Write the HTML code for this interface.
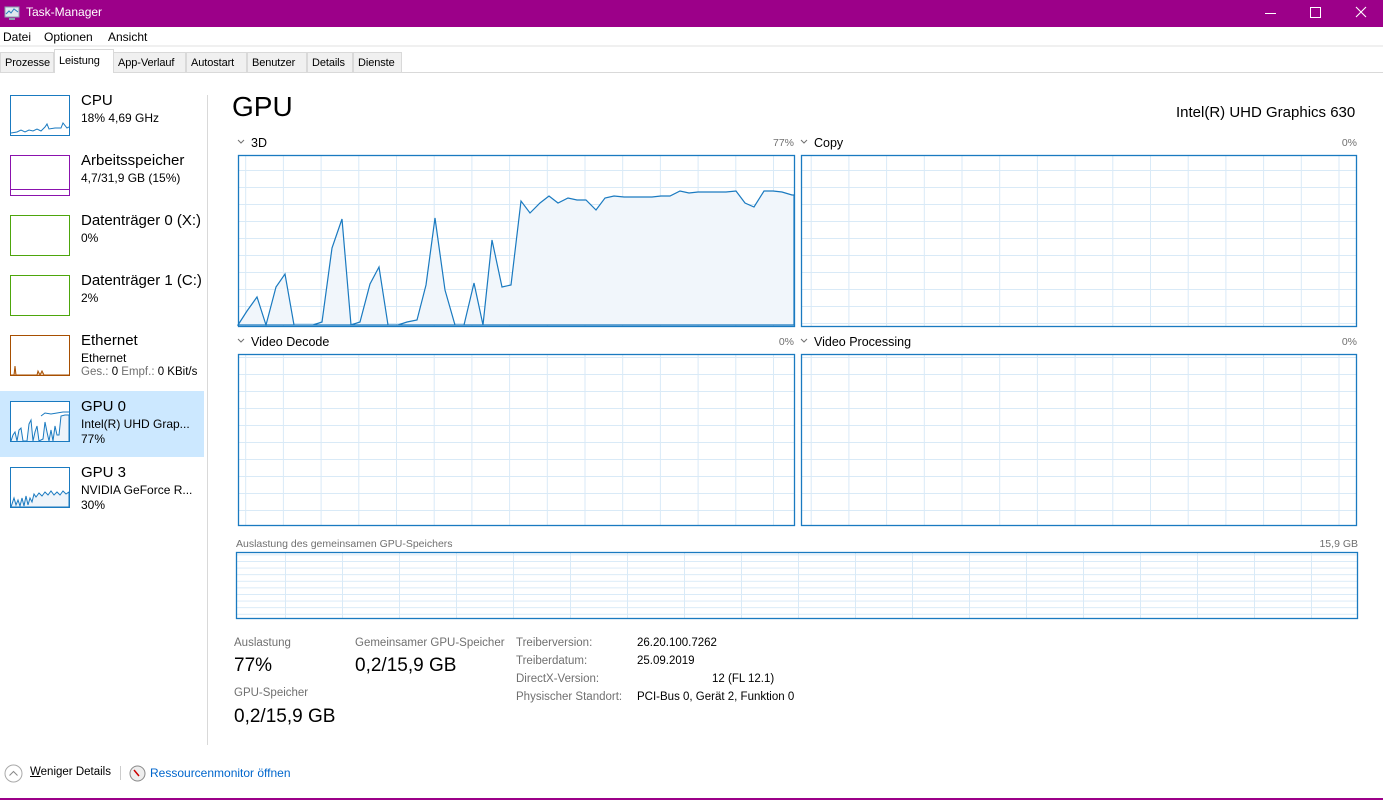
<!DOCTYPE html>
<html><head><meta charset="utf-8"><style>
*{margin:0;padding:0;box-sizing:border-box}
body{width:1383px;height:800px;overflow:hidden;background:#fff;font-family:"Segoe UI","Liberation Sans",sans-serif;color:#000;position:relative}
.a{position:absolute;white-space:nowrap}
.title{left:0;top:0;width:1383px;height:27px;background:#9c0089;color:#fff;font-size:12px}
.menu span{font-size:12px}
.tab{position:absolute;top:52px;height:21px;border:1px solid #d9d9d9;background:#f0f0f0;font-size:11px;padding:4px 0 0 4px;letter-spacing:-0.1px;overflow:hidden}
.thumb{position:absolute;left:10px;width:60px;height:41px;border:1px solid}
.it1{font-size:15px;left:81px}
.it2{font-size:12px;left:81px}
.g{font-size:11.5px;color:#707070}
.v{font-size:11.5px;color:#000}
</style></head><body>
<div class="a title">
 <svg class="a" style="left:4px;top:5px" width="16" height="16" viewBox="0 0 16 16"><rect x="1" y="2" width="14" height="10" fill="#dfe8ee" stroke="#8ba0b0"/><polyline points="2,9 5,6 7,8 10,4 14,7" fill="none" stroke="#2a7fbf"/><rect x="5" y="13" width="6" height="2" fill="#8ba0b0"/></svg>
 <span class="a" style="left:26px;top:5px">Task-Manager</span>
 <div class="a" style="left:1265px;top:13px;width:11px;height:1px;background:#fff"></div>
 <div class="a" style="left:1310px;top:7px;width:11px;height:11px;border:1px solid #fff"></div>
 <svg class="a" style="left:1355px;top:6px" width="12" height="12"><path d="M1 1L11 11M11 1L1 11" stroke="#fff" stroke-width="1.1"/></svg>
</div>
<div class="a menu" style="left:0;top:27px;width:1383px;height:20px;border-bottom:2px solid #f0f0f0">
 <span class="a" style="left:3px;top:3px">Datei</span><span class="a" style="left:44px;top:3px">Optionen</span><span class="a" style="left:108px;top:3px">Ansicht</span>
</div>
<div class="a" style="left:0;top:72px;width:1383px;height:1px;background:#d9d9d9"></div>
<div class="tab" style="left:0;width:54px">Prozesse</div>
<div class="tab" style="left:54px;top:49px;height:24px;width:60px;background:#fff;border-bottom:none;padding-top:5px">Leistung</div>
<div class="tab" style="left:113px;width:73px">App-Verlauf</div>
<div class="tab" style="left:186px;width:61px">Autostart</div>
<div class="tab" style="left:247px;width:60px">Benutzer</div>
<div class="tab" style="left:307px;width:46px">Details</div>
<div class="tab" style="left:353px;width:49px">Dienste</div>

<div class="a" style="left:207px;top:95px;width:1px;height:650px;background:#d9d9d9"></div>
<div class="a" style="left:0;top:391px;width:204px;height:66px;background:#cce8ff"></div>

<div class="thumb" style="top:95px;border-color:#1a7ac0"><svg width="58" height="39"><polyline points="0,37 6,36 10,34 14,36 18,34 22,35 26,33 30,35 34,31 36,28 38,33 44,32 50,32 52,27 56,32 58,31" fill="none" stroke="#1a7ac0"/></svg></div>
<div class="a it1" style="top:92px">CPU</div><div class="a it2" style="top:111px">18% 4,69 GHz</div>

<div class="thumb" style="top:155px;border-color:#8b12ae"><div style="position:absolute;left:0;right:0;bottom:5px;height:1px;background:#8b12ae"></div></div>
<div class="a it1" style="top:152px">Arbeitsspeicher</div><div class="a it2" style="top:171px">4,7/31,9 GB (15%)</div>

<div class="thumb" style="top:215px;border-color:#4da60c"></div>
<div class="a it1" style="top:212px">Datenträger 0 (X:)</div><div class="a it2" style="top:231px">0%</div>

<div class="thumb" style="top:275px;border-color:#4da60c"></div>
<div class="a it1" style="top:272px">Datenträger 1 (C:)</div><div class="a it2" style="top:291px">2%</div>

<div class="thumb" style="top:335px;border-color:#a74f01"><svg width="58" height="39"><polyline points="0,39 3,39 4,30 5,39 26,39 27,35 29,39 31,35 33,39 58,39" fill="#e8c8a8" stroke="#a74f01"/></svg></div>
<div class="a it1" style="top:332px">Ethernet</div><div class="a it2" style="top:351px">Ethernet</div>
<div class="a it2" style="top:366px;color:#707070;font-size:11.5px">Ges.: <span style="color:#000">0</span> Empf.: <span style="color:#000">0 KBit/s</span></div>

<div class="thumb" style="top:401px;border-color:#1a7ac0;background:#fff"><svg width="58" height="39"><polyline points="0,39 2,33 4,30 6,39 8,28 10,26 12,39 16,39 18,22 20,18 22,39 24,30 26,24 28,39 32,37 34,20 36,30 38,39 40,28 42,39 44,24 46,33 48,33 50,14 54,13 58,13 58,39" fill="#eef4fa" stroke="#1a7ac0"/><polyline points="30,14 34,11 40,12 46,11 52,10 58,10" fill="none" stroke="#1a7ac0"/></svg></div>
<div class="a it1" style="top:398px">GPU 0</div><div class="a it2" style="top:417px">Intel(R) UHD Grap...</div><div class="a it2" style="top:432px">77%</div>

<div class="thumb" style="top:467px;border-color:#1a7ac0"><svg width="58" height="39"><polyline points="0,39 3,30 5,37 7,32 9,38 11,30 13,38 15,28 17,37 19,30 21,34 23,26 25,29 28,25 31,28 34,24 37,27 40,23 43,27 46,24 49,27 52,23 55,26 58,24 58,39 0,39" fill="#eef4fa" stroke="#1a7ac0"/></svg></div>
<div class="a it1" style="top:464px">GPU 3</div><div class="a it2" style="top:483px">NVIDIA GeForce R...</div><div class="a it2" style="top:498px">30%</div>

<div class="a" style="left:232px;top:91px;font-size:28px">GPU</div>
<div class="a" style="left:1176px;top:104px;font-size:15px">Intel(R) UHD Graphics 630</div>

<svg class="a" style="left:0;top:0" width="1383" height="800">
<defs>
 <pattern id="gv" x="19" y="0" width="37.7" height="17" patternUnits="userSpaceOnUse"><line x1="0.5" y1="0" x2="0.5" y2="17" stroke="#d9eaf7"/></pattern>
 <pattern id="gh" x="0" y="0" width="60" height="17" patternUnits="userSpaceOnUse"><line x1="0" y1="0.5" x2="60" y2="0.5" stroke="#d9eaf7"/></pattern>
 <pattern id="sv" x="0" y="0" width="57" height="10" patternUnits="userSpaceOnUse"><line x1="0.5" y1="0" x2="0.5" y2="10" stroke="#d9eaf7"/></pattern>
 <pattern id="sh" x="0" y="0" width="60" height="6.6" patternUnits="userSpaceOnUse"><line x1="0" y1="0.5" x2="60" y2="0.5" stroke="#d9eaf7"/></pattern>
</defs>
<g font-family="Segoe UI, Liberation Sans, sans-serif">
<path d="M238 140l3 3 3-3M801 140l3 3 3-3M238 339l3 3 3-3M801 339l3 3 3-3" fill="none" stroke="#707070"/>
<text x="251" y="147" font-size="12.5">3D</text><text x="794" y="146" font-size="10.5" fill="#707070" text-anchor="end">77%</text>
<text x="814" y="147" font-size="12.5">Copy</text><text x="1357" y="146" font-size="10.5" fill="#707070" text-anchor="end">0%</text>
<text x="251" y="346" font-size="12.5">Video Decode</text><text x="794" y="345" font-size="10.5" fill="#707070" text-anchor="end">0%</text>
<text x="814" y="346" font-size="12.5">Video Processing</text><text x="1357" y="345" font-size="10.5" fill="#707070" text-anchor="end">0%</text>
<text x="236" y="547" font-size="10.5" fill="#707070">Auslastung des gemeinsamen GPU-Speichers</text><text x="1358" y="547" font-size="10.5" fill="#707070" text-anchor="end">15,9 GB</text>
</g>
<g>
 <rect x="238" y="155" width="556" height="171" fill="url(#gv)"/><rect x="238" y="155" width="556" height="171" fill="url(#gh)"/>
 <rect x="801" y="155" width="555" height="171" fill="url(#gv)"/><rect x="801" y="155" width="555" height="171" fill="url(#gh)"/>
 <rect x="238" y="354" width="556" height="171" fill="url(#gv)"/><rect x="238" y="354" width="556" height="171" fill="url(#gh)"/>
 <rect x="801" y="354" width="555" height="171" fill="url(#gv)"/><rect x="801" y="354" width="555" height="171" fill="url(#gh)"/>
 <rect x="236" y="552" width="1122" height="67" fill="url(#sv)"/><rect x="236" y="552" width="1122" height="67" fill="url(#sh)"/>
</g>
<polygon fill="#f1f6fb" stroke="#1a7ac0" stroke-width="1.2" points="238,325 247,311 257,297 266,325 276,287 285,274 294,325 303,325 313,325 322,322 332,248 342,219 351,325 360,322 370,284 379,267 388,325 398,325 407,322 417,320 426,285 435,218 445,290 455,325 464,325 474,283 483,325 492,240 502,287 511,285 521,201 530,213 540,203 549,196 558,203 568,198 577,200 586,200 596,210 605,198 614,196 624,197 633,197 642,197 652,197 661,196 670,196 680,191 689,193 698,192 708,192 717,192 726,192 736,191 745,203 754,207 764,191 773,191 782,192 792,195 794,195 794,325"/>
<g fill="none" stroke="#1a7ac0" stroke-width="1.3">
 <rect x="238.5" y="155.5" width="556" height="171"/>
 <rect x="801.5" y="155.5" width="555" height="171"/>
 <rect x="238.5" y="354.5" width="556" height="171"/>
 <rect x="801.5" y="354.5" width="555" height="171"/>
 <rect x="236.5" y="552.5" width="1121" height="66"/>
</g>
</svg>

<div class="a g" style="left:234px;top:637px">Auslastung</div>
<div class="a" style="left:234px;top:655px;font-size:19px">77%</div>
<div class="a g" style="left:234px;top:687px">GPU-Speicher</div>
<div class="a" style="left:234px;top:706px;font-size:19px">0,2/15,9 GB</div>
<div class="a g" style="left:355px;top:637px">Gemeinsamer GPU-Speicher</div>
<div class="a" style="left:355px;top:655px;font-size:19px">0,2/15,9 GB</div>
<div class="a g" style="left:516px;top:637px">Treiberversion:</div><div class="a v" style="left:637px;top:637px">26.20.100.7262</div>
<div class="a g" style="left:516px;top:655px">Treiberdatum:</div><div class="a v" style="left:637px;top:655px">25.09.2019</div>
<div class="a g" style="left:516px;top:673px">DirectX-Version:</div><div class="a v" style="left:712px;top:673px">12 (FL 12.1)</div>
<div class="a g" style="left:516px;top:691px">Physischer Standort:</div><div class="a v" style="left:637px;top:691px">PCI-Bus 0, Gerät 2, Funktion 0</div>

<svg class="a" style="left:4px;top:764px" width="20" height="20"><circle cx="9.5" cy="9.5" r="8.5" fill="#fff" stroke="#aaa"/><path d="M5.5 11.5l4-4 4 4" fill="none" stroke="#888"/></svg>
<div class="a" style="left:30px;top:766px;font-size:11.5px"><u>W</u>eniger Details</div>
<div class="a" style="left:120px;top:766px;width:1px;height:14px;background:#ccc"></div>
<svg class="a" style="left:129px;top:765px" width="17" height="17"><circle cx="8.5" cy="8.5" r="7.5" fill="#eee" stroke="#888"/><path d="M5 5l5 6" stroke="#c00" stroke-width="1.5"/></svg>
<div class="a" style="left:150px;top:766px;font-size:12px;color:#0066cc">Ressourcenmonitor öffnen</div>
<div class="a" style="left:0;top:798px;width:1383px;height:2px;background:#9c0089"></div>
</body></html>
